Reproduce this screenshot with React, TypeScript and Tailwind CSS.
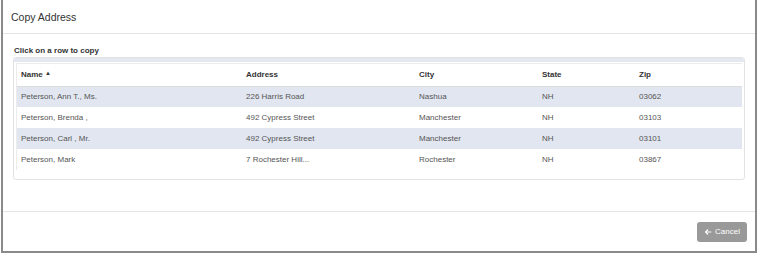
const rows = [
  { name: 'Peterson, Ann T., Ms.', address: '226 Harris Road', city: 'Nashua', state: 'NH', zip: '03062' },
  { name: 'Peterson, Brenda ,', address: '492 Cypress Street', city: 'Manchester', state: 'NH', zip: '03103' },
  { name: 'Peterson, Carl , Mr.', address: '492 Cypress Street', city: 'Manchester', state: 'NH', zip: '03101' },
  { name: 'Peterson, Mark', address: '7 Rochester Hill...', city: 'Rochester', state: 'NH', zip: '03867' },
];

export default function App() {
  return (
    <div className="w-[758px] h-[255px] bg-white font-['Liberation_Sans',Arial,sans-serif] overflow-hidden">
      <div className="ml-px w-[756px] h-[253px] border-x-2 border-b-2 border-[#8a8a8a] bg-white flex flex-col">
        {/* header */}
        <div className="h-[34px] border-b border-[#e5e5e5] pl-[8px] pt-[1px] flex items-center">
          <h4 className="text-[10.5px] text-[#333] leading-none">Copy Address</h4>
        </div>

        {/* body */}
        <div className="flex-1 px-[10px] pt-[13px]">
          <p className="text-[8px] font-bold text-[#333] leading-none pl-px mb-[2px]">Click on a row to copy</p>
          <div className="border border-[#e3e3e3] rounded-[3px] overflow-hidden">
            <div className="h-[4px] bg-[#e3e8f1]"></div>
            <div className="px-[2px] pt-[1px] pb-[9px]">
              <div className="border-l border-t border-[#ececec]">
                <table className="w-full border-collapse text-[8px] leading-none table-fixed">
                  <colgroup>
                    <col className="w-[224px]" />
                    <col className="w-[173px]" />
                    <col className="w-[123px]" />
                    <col className="w-[97px]" />
                    <col />
                  </colgroup>
                  <thead>
                    <tr className="h-[22px] border-b border-[#dcdcdc]">
                      <th className="text-left font-bold text-[#333] pl-[4px]">
                        Name <span className="inline-block align-middle text-[6px] -mt-[3px]">▲</span>
                      </th>
                      <th className="text-left font-bold text-[#333] pl-[5px]">Address</th>
                      <th className="text-left font-bold text-[#333] pl-[5px]">City</th>
                      <th className="text-left font-bold text-[#333] pl-[5px]">State</th>
                      <th className="text-left font-bold text-[#333] pl-[5px]">Zip</th>
                    </tr>
                  </thead>
                  <tbody>
                    {rows.map((r, i) => (
                      <tr
                        key={r.name}
                        className={`h-[21px] text-[#555] ${i % 2 === 0 ? 'bg-[#e1e6f0]' : 'bg-white'}`}
                      >
                        <td className="pl-[4px]">{r.name}</td>
                        <td className="pl-[5px]">{r.address}</td>
                        <td className="pl-[5px]">{r.city}</td>
                        <td className="pl-[5px]">{r.state}</td>
                        <td className="pl-[5px]">{r.zip}</td>
                      </tr>
                    ))}
                  </tbody>
                </table>
              </div>
            </div>
          </div>
        </div>

        {/* footer */}
        <div className="h-[40px] border-t border-[#e5e5e5] flex items-start justify-end pr-[8px] pt-[10px]">
          <button className="h-[20px] w-[50px] rounded-[3px] bg-[#999] text-white text-[8px] flex items-center justify-center gap-[3px]">
            <svg width="8" height="8" viewBox="0 0 16 16" fill="currentColor">
              <path d="M7.3 2.2 1.5 8l5.8 5.8 1.6-1.6L5.8 9.1H14.5V6.9H5.8l3.1-3.1z" />
            </svg>
            Cancel
          </button>
        </div>
      </div>
    </div>
  );
}
